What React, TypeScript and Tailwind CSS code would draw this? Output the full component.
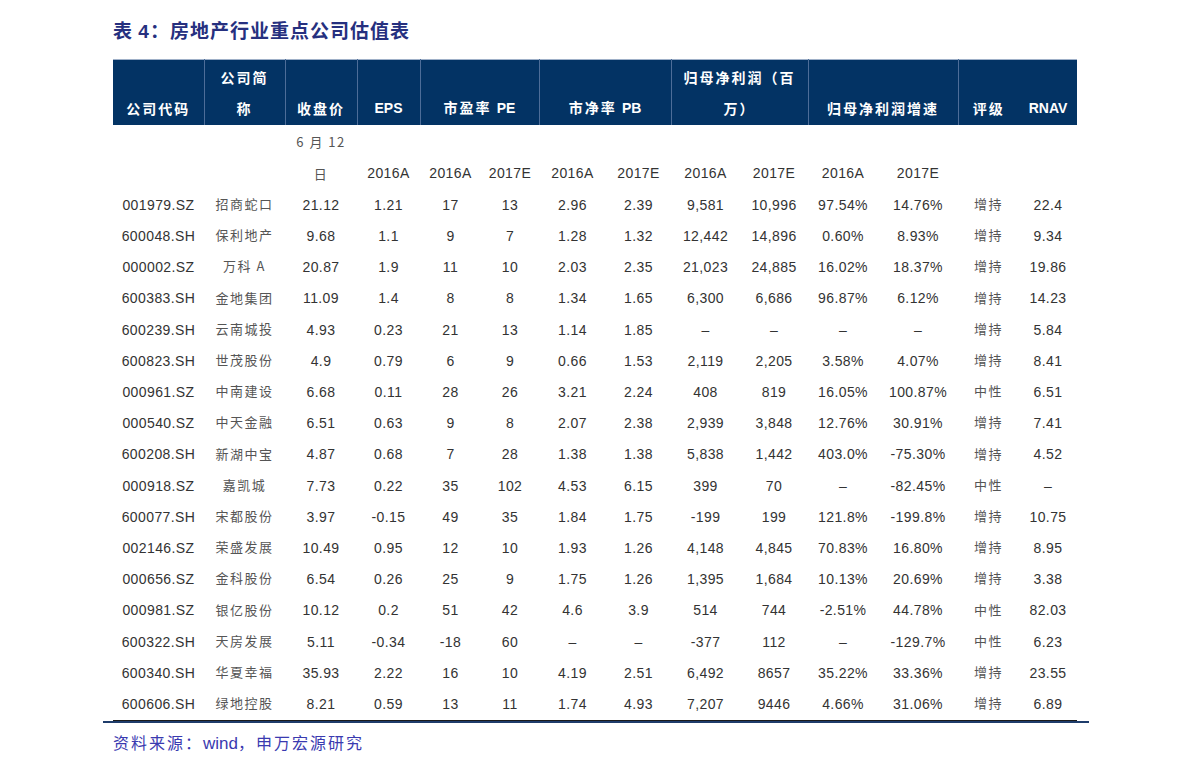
import React from "react";

const cols = [91, 81, 72, 63, 61, 58, 67, 65, 69, 68, 70, 80, 61, 58];

const rows: string[][] = [
  ["001979.SZ", "招商蛇口", "21.12", "1.21", "17", "13", "2.96", "2.39", "9,581", "10,996", "97.54%", "14.76%", "增持", "22.4"],
  ["600048.SH", "保利地产", "9.68", "1.1", "9", "7", "1.28", "1.32", "12,442", "14,896", "0.60%", "8.93%", "增持", "9.34"],
  ["000002.SZ", "万科 A", "20.87", "1.9", "11", "10", "2.03", "2.35", "21,023", "24,885", "16.02%", "18.37%", "增持", "19.86"],
  ["600383.SH", "金地集团", "11.09", "1.4", "8", "8", "1.34", "1.65", "6,300", "6,686", "96.87%", "6.12%", "增持", "14.23"],
  ["600239.SH", "云南城投", "4.93", "0.23", "21", "13", "1.14", "1.85", "–", "–", "–", "–", "增持", "5.84"],
  ["600823.SH", "世茂股份", "4.9", "0.79", "6", "9", "0.66", "1.53", "2,119", "2,205", "3.58%", "4.07%", "增持", "8.41"],
  ["000961.SZ", "中南建设", "6.68", "0.11", "28", "26", "3.21", "2.24", "408", "819", "16.05%", "100.87%", "中性", "6.51"],
  ["000540.SZ", "中天金融", "6.51", "0.63", "9", "8", "2.07", "2.38", "2,939", "3,848", "12.76%", "30.91%", "增持", "7.41"],
  ["600208.SH", "新湖中宝", "4.87", "0.68", "7", "28", "1.38", "1.38", "5,838", "1,442", "403.0%", "-75.30%", "增持", "4.52"],
  ["000918.SZ", "嘉凯城", "7.73", "0.22", "35", "102", "4.53", "6.15", "399", "70", "–", "-82.45%", "中性", "–"],
  ["600077.SH", "宋都股份", "3.97", "-0.15", "49", "35", "1.84", "1.75", "-199", "199", "121.8%", "-199.8%", "增持", "10.75"],
  ["002146.SZ", "荣盛发展", "10.49", "0.95", "12", "10", "1.93", "1.26", "4,148", "4,845", "70.83%", "16.80%", "增持", "8.95"],
  ["000656.SZ", "金科股份", "6.54", "0.26", "25", "9", "1.75", "1.26", "1,395", "1,684", "10.13%", "20.69%", "增持", "3.38"],
  ["000981.SZ", "银亿股份", "10.12", "0.2", "51", "42", "4.6", "3.9", "514", "744", "-2.51%", "44.78%", "中性", "82.03"],
  ["600322.SH", "天房发展", "5.11", "-0.34", "-18", "60", "–", "–", "-377", "112", "–", "-129.7%", "中性", "6.23"],
  ["600340.SH", "华夏幸福", "35.93", "2.22", "16", "10", "4.19", "2.51", "6,492", "8657", "35.22%", "33.36%", "增持", "23.55"],
  ["600606.SH", "绿地控股", "8.21", "0.59", "13", "11", "1.74", "4.93", "7,207", "9446", "4.66%", "31.06%", "增持", "6.89"],
];

const num = "p-0 font-['Liberation_Sans','Noto_Sans_CJK_SC',sans-serif] tracking-[0.4px]";
const han = "font-['Noto_Sans_CJK_SC',sans-serif] tracking-[1.5px] text-[13px] text-[#555]";
const hd = "px-0 py-[1.5px] align-bottom text-center border-r border-[#4d6d98]";
const hh = `${hd} font-['Noto_Sans_CJK_SC',sans-serif] text-[14px] tracking-[2px]`;

const App = () => {
  return (
    <div className="w-[1191px] h-[772px] bg-white pt-[18px]">
      {/* Title */}
      <h1 className="ml-[113px] text-[19px] leading-[24px] font-bold tracking-[1px] text-[#26307f] font-['Noto_Sans_CJK_SC',sans-serif]">
        表 <span className="font-['Liberation_Sans',sans-serif]">4</span>：房地产行业重点公司估值表
      </h1>

      <div className="ml-[103px] w-[986px] mt-[15px]">
        <table className="ml-[10px] w-[964px] table-fixed border-collapse text-[14px] leading-[31.2px] text-[#333]">
          <colgroup>
            {cols.map((w, i) => (
              <col key={i} style={{ width: w }} />
            ))}
          </colgroup>
          <thead>
            <tr className="bg-[#033364] text-white font-bold border-t border-[#9fb0c8]">
              <th className={hh}>公司代码</th>
              <th className={hh}>
                公司简
                <br />称
              </th>
              <th className={hh}>收盘价</th>
              <th className={`${hd} font-['Liberation_Sans',sans-serif]`}>EPS</th>
              <th colSpan={2} className={hh}>
                市盈率 <span className="font-['Liberation_Sans',sans-serif] tracking-normal">PE</span>
              </th>
              <th colSpan={2} className={hh}>
                市净率 <span className="font-['Liberation_Sans',sans-serif] tracking-normal">PB</span>
              </th>
              <th colSpan={2} className={hh}>
                归母净利润（百
                <br />万）
              </th>
              <th colSpan={2} className={hh}>归母净利润增速</th>
              <th className="px-0 py-[1.5px] align-bottom text-center font-['Noto_Sans_CJK_SC',sans-serif] text-[14px] tracking-[2px]">
                评级
              </th>
              <th className="px-0 py-[1.5px] align-bottom text-center font-['Liberation_Sans',sans-serif]">RNAV</th>
            </tr>
          </thead>
          <tbody>
            <tr>
              <td className="py-[1px]" />
              <td />
              <td className={`align-bottom text-center py-[1px] ${han} tracking-[0.5px] text-[#444]`}>
                6 月 12
                <br />日
              </td>
              {["2016A", "2016A", "2017E", "2016A", "2017E", "2016A", "2017E", "2016A", "2017E"].map((y, i) => (
                <td key={i} className={`align-bottom text-center py-[1px] ${num}`}>
                  {y}
                </td>
              ))}
              <td />
              <td />
            </tr>
            {rows.map((r, i) => (
              <tr key={i} className={i === rows.length - 1 ? "border-b border-[#1a1a1a]" : ""}>
                {r.map((c, j) => (
                  <td
                    key={j}
                    className={`text-center whitespace-nowrap ${
                      j === 1 || j === 12 ? `${han} px-0 pt-0 pb-[3px] leading-[28px]` : num
                    }`}
                  >
                    {c}
                  </td>
                ))}
              </tr>
            ))}
          </tbody>
        </table>
        <div className="h-[2px] bg-[#1e3c6b]" />
      </div>

      {/* Source */}
      <p className="ml-[113px] mt-[9px] text-[16px] leading-[20px] tracking-[2px] text-[#3a3ab0] font-['Noto_Sans_CJK_SC',sans-serif]">
        资料来源：<span className="font-['Liberation_Sans',sans-serif] tracking-normal text-[17px]">wind</span>，申万宏源研究
      </p>
    </div>
  );
};

export default App;
